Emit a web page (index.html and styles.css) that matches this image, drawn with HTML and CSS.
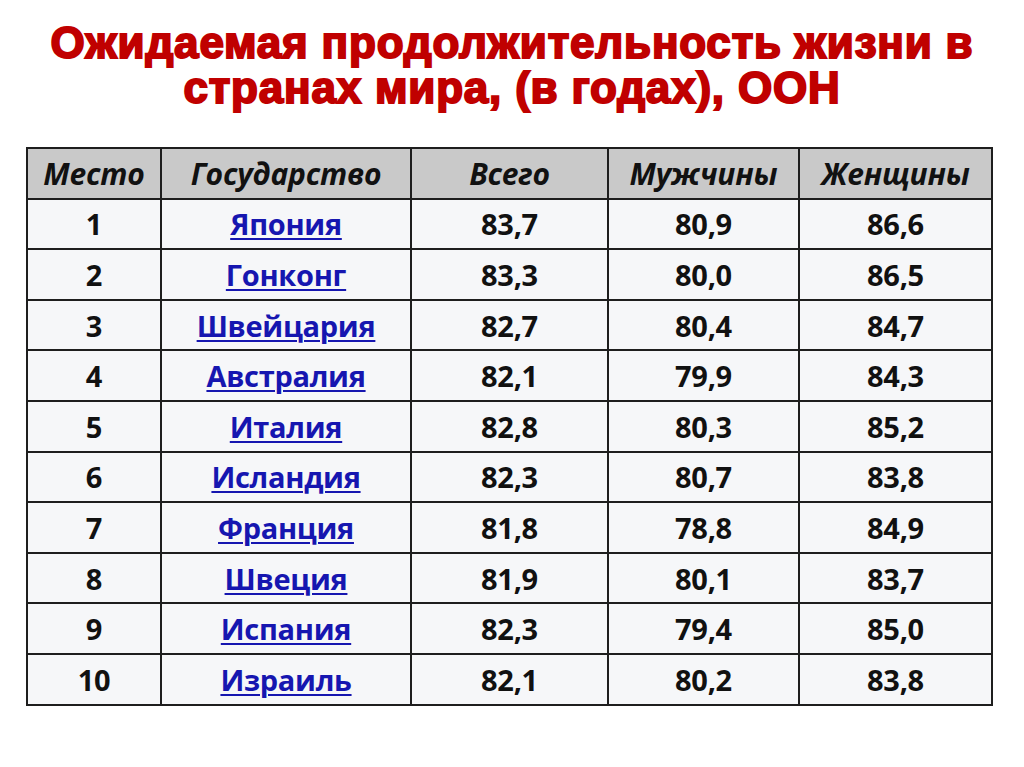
FILE: index.html
```html
<!DOCTYPE html>
<html lang="ru">
<head>
<meta charset="utf-8">
<link rel="stylesheet" href="styles.css">
</head>
<body>
<div class="slide">
  <h1 class="title">Ожидаемая продолжительность жизни в<br>странах мира, (в годах), ООН</h1>
  <table class="data">
    <colgroup>
      <col class="c1"><col class="c2"><col class="c3"><col class="c4"><col class="c5">
    </colgroup>
    <thead>
      <tr><th>Место</th><th>Государство</th><th>Всего</th><th>Мужчины</th><th>Женщины</th></tr>
    </thead>
    <tbody>
      <tr><td>1</td><td><a href="#">Япония</a></td><td>83,7</td><td>80,9</td><td>86,6</td></tr>
      <tr><td>2</td><td><a href="#">Гонконг</a></td><td>83,3</td><td>80,0</td><td>86,5</td></tr>
      <tr><td>3</td><td><a href="#">Швейцария</a></td><td>82,7</td><td>80,4</td><td>84,7</td></tr>
      <tr><td>4</td><td><a href="#">Австралия</a></td><td>82,1</td><td>79,9</td><td>84,3</td></tr>
      <tr><td>5</td><td><a href="#">Италия</a></td><td>82,8</td><td>80,3</td><td>85,2</td></tr>
      <tr><td>6</td><td><a href="#">Исландия</a></td><td>82,3</td><td>80,7</td><td>83,8</td></tr>
      <tr><td>7</td><td><a href="#">Франция</a></td><td>81,8</td><td>78,8</td><td>84,9</td></tr>
      <tr><td>8</td><td><a href="#">Швеция</a></td><td>81,9</td><td>80,1</td><td>83,7</td></tr>
      <tr><td>9</td><td><a href="#">Испания</a></td><td>82,3</td><td>79,4</td><td>85,0</td></tr>
      <tr><td>10</td><td><a href="#">Израиль</a></td><td>82,1</td><td>80,2</td><td>83,8</td></tr>
    </tbody>
  </table>
</div>
</body>
</html>
```
FILE: styles.css
```css
html, body {
  margin: 0;
  padding: 0;
  background: #ffffff;
}
.slide {
  width: 1024px;
  height: 767px;
  padding-top: 20px;
  box-sizing: border-box;
}
.title {
  margin: 0;
  text-align: center;
  font-family: "Liberation Sans", Arial, sans-serif;
  font-weight: 700;
  font-size: 44px;
  line-height: 45px;
  color: #c00000;
  -webkit-text-stroke: 2px #c00000;
  letter-spacing: 0.8px;
}
.data {
  margin: 37px 0 0 26px;
  width: 965px;
  border-collapse: collapse;
  table-layout: fixed;
  font-family: "Open Sans", sans-serif;
  font-weight: 700;
  font-size: 29px;
  color: #111111;
}
.c1 { width: 134px; }
.c2 { width: 250px; }
.c3 { width: 197px; }
.c4 { width: 191px; }
.c5 { width: 193px; }
.data th, .data td {
  border: 2px solid #1e1e1e;
  text-align: center;
  padding: 0;
  height: 48.6px;
}
.data th {
  background: #c9c9c9;
  font-style: italic;
  font-size: 30px;
  letter-spacing: -0.2px;
}
.data td {
  background: #f6f7f9;
  letter-spacing: -0.3px;
}
.data a {
  color: #1616b0;
  text-decoration: underline;
  text-decoration-thickness: 2px;
  text-underline-offset: 3px;
}
```
